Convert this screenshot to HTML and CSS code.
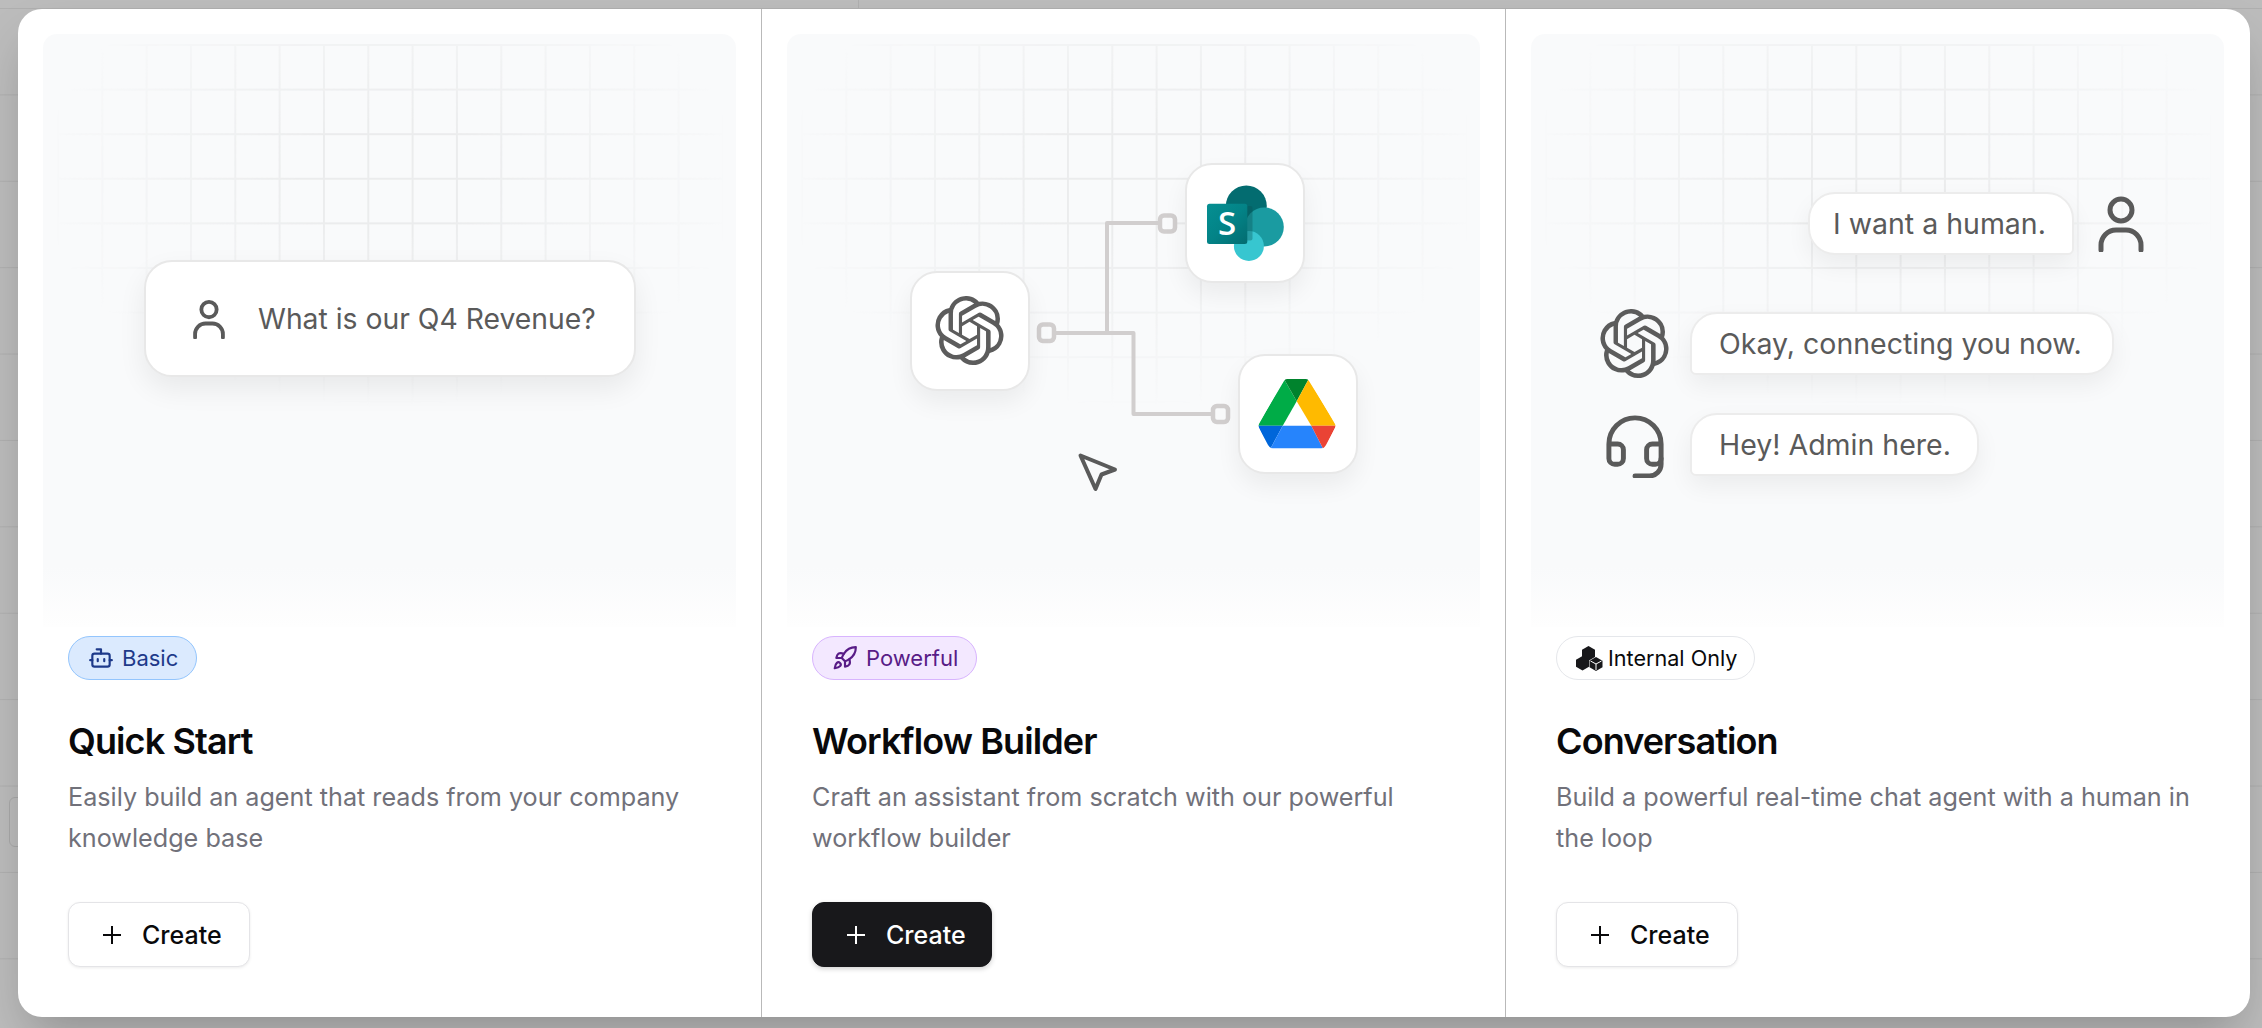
FILE: index.html
```html
<!DOCTYPE html>
<html lang="en">
<head>
<meta charset="utf-8">
<title>Create agent</title>
<link rel="stylesheet" href="styles.css">
</head>
<body>
<svg class="defs" width="0" height="0" aria-hidden="true">
  <defs>
    <path id="openai" d="M22.2819 9.8211a5.9847 5.9847 0 0 0-.5157-4.9108 6.0462 6.0462 0 0 0-6.5098-2.9A6.0651 6.0651 0 0 0 4.9807 4.1818a5.9847 5.9847 0 0 0-3.9977 2.9 6.0462 6.0462 0 0 0 .7427 7.0966 5.98 5.98 0 0 0 .511 4.9107 6.051 6.051 0 0 0 6.5146 2.9001A5.9847 5.9847 0 0 0 13.2599 24a6.0557 6.0557 0 0 0 5.7718-4.2058 5.9894 5.9894 0 0 0 3.9977-2.9001 6.0557 6.0557 0 0 0-.7475-7.0729zm-9.022 12.6081a4.4755 4.4755 0 0 1-2.8764-1.0408l.1419-.0804 4.7783-2.7582a.7948.7948 0 0 0 .3927-.6813v-6.7369l2.02 1.1686a.071.071 0 0 1 .038.052v5.5826a4.504 4.504 0 0 1-4.4945 4.4944zm-9.6607-4.1254a4.4708 4.4708 0 0 1-.5346-3.0137l.142.0852 4.783 2.7582a.7712.7712 0 0 0 .7806 0l5.8428-3.3685v2.3324a.0804.0804 0 0 1-.0332.0615L9.74 19.9502a4.4992 4.4992 0 0 1-6.1408-1.6464zM2.3408 7.8956a4.485 4.485 0 0 1 2.3655-1.9728V11.6a.7664.7664 0 0 0 .3879.6765l5.8144 3.3543-2.0201 1.1685a.0757.0757 0 0 1-.071 0l-4.8303-2.7865A4.504 4.504 0 0 1 2.3408 7.872zm16.5963 3.8558L13.1038 8.364 15.1192 7.2a.0757.0757 0 0 1 .071 0l4.8303 2.7913a4.4944 4.4944 0 0 1-.6765 8.1042v-5.6772a.79.79 0 0 0-.407-.667zm2.0107-3.0231l-.142-.0852-4.7735-2.7818a.7759.7759 0 0 0-.7854 0L9.409 9.2297V6.8974a.0662.0662 0 0 1 .0284-.0615l4.8303-2.7866a4.4992 4.4992 0 0 1 6.6802 4.66zM8.3065 12.863l-2.02-1.1638a.0804.0804 0 0 1-.038-.0567V6.0742a4.4992 4.4992 0 0 1 7.3757-3.4537l-.142.0805L8.704 5.459a.7948.7948 0 0 0-.3927.6813zm1.0976-2.3654l2.602-1.4998 2.6069 1.4998v2.9994l-2.5974 1.4997-2.6067-1.4997Z"/>
    <g id="person" fill="none" stroke-linecap="round">
      <circle cx="23" cy="15" r="11"/>
      <path d="M3 55V50A15 15 0 0 1 18 35H28A15 15 0 0 1 43 50V55"/>
    </g>
    <path id="plus" d="M10 1V19M1 10H19" fill="none" stroke-width="2"/>
    <linearGradient id="sp" x1="0" y1="0" x2="1" y2="1">
      <stop offset="0" stop-color="#058f92"/>
      <stop offset=".5" stop-color="#038387"/>
      <stop offset="1" stop-color="#036c70"/>
    </linearGradient>
    <clipPath id="drive-clip">
      <path d="M26,2 Q27,0 29,0 H48 Q50,0 51,2 L77,44 Q78,46.500 77,49 L68,66 Q66,69.500 63,69.500 H15 Q12,69.500 10,66 L1,49 Q0,46.500 1,44 Z"/>
    </clipPath>
  </defs>
</svg>

<div class="backdrop-box"></div>
<div class="backdrop-tick"></div>

<main class="modal">
  <section class="col">
    <div class="preview">
      <div class="grid"></div>
      <div class="ask-card">
        <svg class="ask-icon" viewBox="0 0 46 57"><use href="#person"/></svg>
        <span>What is our Q4 Revenue?</span>
      </div>
    </div>
    <div class="info">
      <span class="badge badge-blue">
        <svg class="badge-icon" viewBox="0 0 24 24" fill="none" stroke="currentColor" stroke-width="2" stroke-linecap="round" stroke-linejoin="round"><path d="M12 8V4H8"/><rect x="4" y="8" width="16" height="12" rx="2"/><path d="M2 14h2M20 14h2M15 13v2M9 13v2"/></svg>
        Basic
      </span>
      <h2 class="title">Quick Start</h2>
      <p class="desc">Easily build an agent that reads from your company knowledge base</p>
      <button class="btn"><svg class="plus" viewBox="0 0 20 20"><use href="#plus"/></svg>Create</button>
    </div>
  </section>

  <section class="col">
    <div class="preview">
      <div class="grid"></div>
      <svg class="wires" viewBox="0 0 694 593" fill="none">
        <g stroke="#d1cece" stroke-width="4" stroke-linejoin="round">
          <path d="M268 299H346.500V380H425"/>
          <path d="M320 299V189H372"/>
        </g>
        <g stroke="#d1cece" stroke-width="4.500" fill="#f9fafb">
          <rect x="252" y="290.500" width="15" height="16.500" rx="4"/>
          <rect x="426" y="372" width="15" height="16" rx="4"/>
          <rect x="373" y="181.500" width="15" height="16" rx="4"/>
        </g>
        <path d="M293.500 421.500L328 435.500L314.500 440.500L308.500 455Z" stroke="#5a5a5a" stroke-width="4" stroke-linejoin="round"/>
      </svg>
      <div class="tile tile-openai">
        <svg class="tile-logo" viewBox="0 0 24 24"><use href="#openai"/></svg>
      </div>
      <div class="tile tile-sharepoint">
        <svg class="sp-logo" viewBox="0 0 77 75">
          <circle cx="39.300" cy="20" r="20.500" fill="#036c70"/>
          <circle cx="57.300" cy="41" r="19.500" fill="#1a9ba1"/>
          <circle cx="41.900" cy="60" r="15" fill="#37c6d0"/>
          <path d="M20 20H43.500A2 2 0 0 1 45.500 22V52.500A2 2 0 0 1 43.500 54.500H20Z" fill="#0b4f52" opacity=".35"/>
          <rect x="0" y="17.700" width="40.300" height="40.300" rx="2.500" fill="url(#sp)"/>
          <text class="sp-s" x="20.200" y="48.500" text-anchor="middle">S</text>
        </svg>
      </div>
      <div class="tile tile-drive">
        <svg class="drive-logo" viewBox="0 0 78 69.500">
          <g clip-path="url(#drive-clip)">
            <polygon points="26,0 38.700,22.300 24.700,46.700 0,46.700" fill="#00ac47"/>
            <polygon points="26,0 50.700,0 38.700,22.300" fill="#00832d"/>
            <polygon points="50.700,0 78,46.700 53.300,46.700 38.700,22.300" fill="#ffba00"/>
            <polygon points="0,46.700 24.700,46.700 12.500,69.500 10,69.500" fill="#0066da"/>
            <polygon points="24.700,46.700 53.300,46.700 65,69.500 12.500,69.500" fill="#2684fc"/>
            <polygon points="53.300,46.700 78,46.700 67,69.500 65,69.500" fill="#ea4335"/>
          </g>
        </svg>
      </div>
    </div>
    <div class="info">
      <span class="badge badge-purple">
        <svg class="badge-icon" viewBox="0 0 24 24" fill="none" stroke="currentColor" stroke-width="2" stroke-linecap="round" stroke-linejoin="round"><path d="M4.500 16.500c-1.500 1.260-2 5-2 5s3.740-.5 5-2c.71-.84.7-2.130-.09-2.910a2.180 2.180 0 0 0-2.910-.09z"/><path d="m12 15-3-3a22 22 0 0 1 2-3.950A12.880 12.880 0 0 1 22 2c0 2.720-.78 7.500-6 11a22.350 22.350 0 0 1-4 2z"/><path d="M9 12H4s.55-3.030 2-4c1.620-1.080 5 0 5 0"/><path d="M12 15v5s3.030-.55 4-2c1.080-1.620 0-5 0-5"/></svg>
        Powerful
      </span>
      <h2 class="title">Workflow Builder</h2>
      <p class="desc">Craft an assistant from scratch with our powerful workflow builder</p>
      <button class="btn btn-dark"><svg class="plus" viewBox="0 0 20 20"><use href="#plus"/></svg>Create</button>
    </div>
  </section>

  <section class="col">
    <div class="preview">
      <div class="grid"></div>
      <div class="bubble bubble-human">I want a human.</div>
      <svg class="chat-person" viewBox="0 0 46 57"><use href="#person"/></svg>
      <svg class="chat-openai" viewBox="0 0 24 24"><use href="#openai"/></svg>
      <div class="bubble bubble-bot">Okay, connecting you now.</div>
      <svg class="chat-headset" viewBox="2 1 20 22" fill="none" stroke="#5a5a5a" stroke-width="1.700" stroke-linecap="round" stroke-linejoin="round"><path d="M3 11h3a2 2 0 0 1 2 2v3a2 2 0 0 1-2 2H5a2 2 0 0 1-2-2v-5Zm0 0a9 9 0 1 1 18 0m0 0v5a2 2 0 0 1-2 2h-1a2 2 0 0 1-2-2v-3a2 2 0 0 1 2-2h3Z"/><path d="M21 16v2a4 4 0 0 1-4 4h-5"/></svg>
      <div class="bubble bubble-admin">Hey! Admin here.</div>
    </div>
    <div class="info">
      <span class="badge badge-plain">
        <svg class="cubes" viewBox="0 0 27 25">
          <polygon points="12.500,0 19,3.800 19,11 12.500,14.800 6,11 6,3.800" fill="#18181b"/>
          <polygon points="6.500,10 13,13.800 13,20.800 6.500,24.600 0,20.800 0,13.800" fill="#18181b"/>
          <polygon points="20,11 26.500,14.800 26.500,21.200 20,25 13.500,21.200 13.500,14.800" fill="#18181b"/>
          <path d="M20 18V24M20 18L14.500 15M20 18L25.500 15" stroke="#fff" stroke-width="1" fill="none"/>
        </svg>
        Internal Only
      </span>
      <h2 class="title">Conversation</h2>
      <p class="desc">Build a powerful real-time chat agent with a human in the loop</p>
      <button class="btn"><svg class="plus" viewBox="0 0 20 20"><use href="#plus"/></svg>Create</button>
    </div>
  </section>
</main>
</body>
</html>
```
FILE: styles.css
```css
* { box-sizing: border-box; }

html, body { height: 100%; }

body {
  margin: 0;
  padding: 9px 12px 11px 18px;
  overflow: hidden;
  font-family: Inter, "Liberation Sans", sans-serif;
  background-color: #bcbcbc;
  background-image: linear-gradient(#afafaf 1px, transparent 1px);
  background-size: 100% 86.4px;
  background-position: 0 8px;
}

.defs { position: absolute; }

.backdrop-box {
  position: absolute;
  left: 9px;
  top: 797px;
  width: 20px;
  height: 50px;
  border: 1px solid #a9a9a9;
  border-radius: 6px;
}

.backdrop-tick {
  position: absolute;
  left: 858px;
  top: 0;
  width: 1px;
  height: 9px;
  background: #afafaf;
}

.modal {
  position: relative;
  display: grid;
  grid-template-columns: repeat(3, 1fr);
  height: 1008px;
  background: #fff;
  border-radius: 24px;
  box-shadow: 0 25px 50px -12px rgba(0, 0, 0, .25);
  overflow: hidden;
}

.col {
  display: flex;
  flex-direction: column;
  padding: 25px 25px 0;
  border-right: 1px solid #b9b9b9;
}

.col:last-child { border-right: 0; padding-right: 26px; }

.preview {
  position: relative;
  height: 593px;
  overflow: hidden;
  border-radius: 14px 14px 0 0;
  background: linear-gradient(#f9fafb 90%, #fefefe 100%);
  color: #5a5a5a;
}

.grid {
  position: absolute;
  left: 14px;
  top: 10px;
  width: 666px;
  height: 372px;
  background-image:
    linear-gradient(to right, #ebeced 2px, transparent 2px),
    linear-gradient(to bottom, #ebeced 2px, transparent 2px);
  background-size: 44.33px 44.6px;
  -webkit-mask-image: radial-gradient(ellipse 53% 62% at 50% 36%, #000 25%, rgba(0, 0, 0, .5) 62%, transparent 100%);
  mask-image: radial-gradient(ellipse 53% 62% at 50% 36%, #000 25%, rgba(0, 0, 0, .5) 62%, transparent 100%);
}

.ask-card {
  position: absolute;
  left: 101px;
  top: 226px;
  display: flex;
  align-items: center;
  gap: 33px;
  width: 492px;
  height: 117px;
  padding-left: 47px;
  background: #fff;
  border: 2px solid #e8e8e8;
  border-radius: 28px;
  box-shadow: 0 12px 28px rgba(0, 0, 0, .07);
  font-size: 28.3px;
  white-space: nowrap;
}

.ask-icon {
  width: 32px;
  height: 40px;
  stroke: #5a5a5a;
  stroke-width: 5.5;
}

.tile {
  position: absolute;
  display: flex;
  align-items: center;
  justify-content: center;
  width: 120px;
  height: 120px;
  background: #fff;
  border: 2px solid #e8e8e8;
  border-radius: 27px;
  box-shadow: 0 12px 24px rgba(0, 0, 0, .06);
}

.tile-openai { left: 122.5px; top: 236.5px; }
.tile-sharepoint { left: 398px; top: 129px; }
.tile-drive { left: 450.5px; top: 320px; padding-right: 2px; }

.tile-logo { width: 69px; height: 69px; fill: #5c5c5c; }
.sp-logo { width: 77px; height: 75px; overflow: visible; }
.drive-logo { width: 78px; height: 69.5px; }

.sp-s {
  font-family: "Open Sans", sans-serif;
  font-size: 33px;
  font-weight: 600;
  fill: #fff;
}

.wires { position: absolute; inset: 0; width: 694px; height: 593px; }

.bubble {
  position: absolute;
  display: flex;
  align-items: center;
  height: 63px;
  padding: 0 26px 0 27px;
  background: #fff;
  border: 2px solid #ececec;
  border-radius: 27px;
  box-shadow: 0 10px 24px rgba(0, 0, 0, .06);
  font-size: 28.5px;
  white-space: nowrap;
}

.bubble-human { left: 277px; top: 158px; border-bottom-right-radius: 6px; padding-left: 23px; }
.bubble-bot { left: 159px; top: 278px; border-bottom-left-radius: 6px; padding-right: 30px; }
.bubble-admin { left: 159px; top: 379px; border-bottom-left-radius: 6px; }

.chat-person {
  position: absolute;
  left: 567px;
  top: 161px;
  width: 46px;
  height: 57px;
  stroke: #5a5a5a;
  stroke-width: 5;
}

.chat-openai {
  position: absolute;
  left: 69px;
  top: 275px;
  width: 69px;
  height: 69px;
  fill: #5c5c5c;
}

.chat-headset {
  position: absolute;
  left: 74.6px;
  top: 380.6px;
  width: 58px;
  height: 63.8px;
}

.info {
  display: flex;
  flex-direction: column;
  align-items: flex-start;
  padding: 9px 25px 0;
}

.badge {
  display: inline-flex;
  align-items: center;
  gap: 8px;
  height: 44px;
  padding: 0 18px 0 19px;
  border: 1px solid;
  border-radius: 22px;
  font-size: 22px;
  white-space: nowrap;
}

.badge-icon { width: 26px; height: 26px; flex: none; }

.badge-blue { background: #dbeafe; border-color: #93c5fd; color: #1e3a8a; }
.badge-purple { background: #f3e8ff; border-color: #d8b4fe; color: #581c87; }
.badge-plain { background: #fff; border-color: #e5e7eb; color: #09090b; gap: 5px; font-size: 21.6px; padding-right: 17px; }

.cubes { width: 27px; height: 25px; flex: none; }

.title {
  margin: 40px 0 0;
  font-size: 36px;
  line-height: 42px;
  font-weight: 600;
  letter-spacing: -.9px;
  color: #09090b;
}

.desc {
  margin: 15px 0 0;
  font-size: 25.2px;
  line-height: 41px;
  color: #71717a;
}

.btn {
  display: inline-flex;
  align-items: center;
  gap: 20px;
  height: 65px;
  margin-top: 43px;
  padding: 0 27px 0 33px;
  background: #fff;
  border: 1px solid #e4e4e7;
  border-radius: 12px;
  box-shadow: 0 1px 3px rgba(0, 0, 0, .08);
  font-family: inherit;
  font-size: 25px;
  font-weight: 500;
  color: #09090b;
}

.btn-dark { background: #18181b; border-color: #18181b; color: #fff; padding-right: 25px; box-shadow: 0 2px 5px rgba(0, 0, 0, .18); }

.plus { width: 20px; height: 20px; stroke: currentColor; flex: none; }
```
